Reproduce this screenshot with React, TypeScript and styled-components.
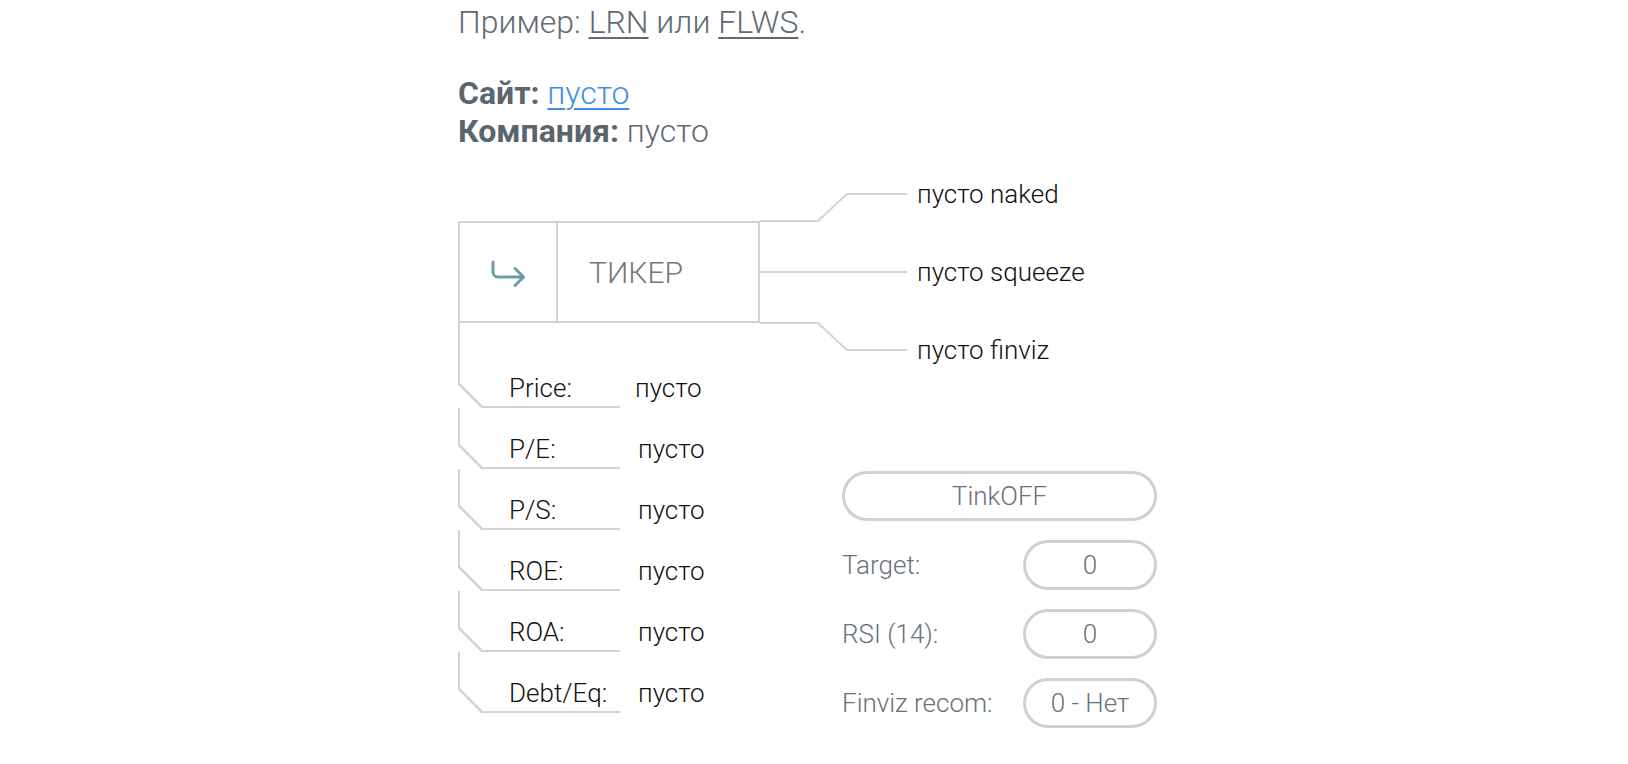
import React from "react";
import styled, { createGlobalStyle } from "styled-components";

const GlobalStyle = createGlobalStyle`
  html, body {
    margin: 0;
    padding: 0;
    background: #ffffff;
  }
  body {
    font-family: Roboto, "Noto Sans", "Liberation Sans", sans-serif;
    -webkit-font-smoothing: antialiased;
  }
`;

const LINE = "#d3d3d3";

const Page = styled.main`
  width: 712px;
  margin: 0 auto;
  padding-top: 3px;
  box-sizing: border-box;
`;

const Lead = styled.p`
  margin: 0;
  font-size: 32px;
  line-height: 38px;
  font-weight: 300;
  color: #5f6a74;
`;

const GrayLink = styled.a`
  color: #5f6a74;
  text-decoration: underline;
  text-decoration-thickness: 2px;
  text-underline-offset: 4px;
`;

const Info = styled.div`
  margin-top: 33px;
  font-size: 32px;
  line-height: 38px;
  font-weight: 300;
  color: #5f6a74;
`;

const InfoLine = styled.div``;

const InfoKey = styled.b`
  font-weight: 700;
  color: #5b656e;
`;

const BlueLink = styled.a`
  color: #3d8fe8;
  text-decoration: underline;
  text-decoration-thickness: 2px;
  text-underline-offset: 4px;
`;

const Hero = styled.section`
  display: flex;
  align-items: center;
  margin-top: 71px;
`;

const TickerBox = styled.div`
  display: flex;
  width: 302px;
  height: 102px;
  box-sizing: border-box;
  border: 2px solid ${LINE};
`;

const IconCell = styled.div`
  width: 98px;
  border-right: 2px solid ${LINE};
  display: flex;
  align-items: center;
  justify-content: center;
  padding-top: 3px;
  box-sizing: border-box;
`;

const TickerInput = styled.input`
  flex: 1;
  min-width: 0;
  border: none;
  outline: none;
  background: transparent;
  padding: 0 0 0 31px;
  font-family: Roboto, "Noto Sans", sans-serif;
  font-size: 30px;
  font-weight: 300;
  color: #333;
  &::placeholder {
    color: #767676;
    opacity: 1;
  }
`;

const Connector = styled.svg`
  display: block;
  flex: none;
  margin: -29px 0;
`;

const Outputs = styled.ul`
  list-style: none;
  margin: -42px 0 -42px 10px;
  padding: 0;
  display: flex;
  flex-direction: column;
  gap: 48px;
`;

const OutputItem = styled.li`
  font-size: 26px;
  line-height: 30px;
  font-weight: 300;
  color: #111;
  white-space: nowrap;
`;

const Lower = styled.section`
  display: grid;
  grid-template-columns: 384px 315px;
  align-items: start;
`;

const Metrics = styled.div`
  display: flex;
  flex-direction: column;
`;

const MetricRow = styled.div`
  display: flex;
  align-items: flex-end;
`;

const MetricCell = styled.div<{ $first?: boolean }>`
  position: relative;
  width: 162px;
  height: ${(p) => (p.$first ? 85 : 61)}px;
  box-sizing: border-box;
  border-left: 2px solid ${LINE};
  border-bottom: 2px solid ${LINE};
  padding: 0 0 4px 49px;
  display: flex;
  align-items: flex-end;
  font-size: 26px;
  line-height: 28px;
  font-weight: 300;
  color: #111;
  &::after {
    content: "";
    position: absolute;
    left: -2px;
    bottom: -2px;
    width: 25px;
    height: 25px;
    background: linear-gradient(
      to top right,
      #fff calc(50% - 1.6px),
      ${LINE} calc(50% - 0.9px),
      ${LINE} calc(50% + 0.9px),
      #fff calc(50% + 1.6px)
    );
  }
`;

const MetricValue = styled.span<{ $gap: number }>`
  margin-left: ${(p) => p.$gap}px;
  padding-bottom: 6px;
  font-size: 26px;
  line-height: 28px;
  font-weight: 300;
  color: #111;
`;

const Side = styled.div`
  margin-top: 148px;
  display: flex;
  flex-direction: column;
  gap: 19px;
`;

const Pill = styled.button`
  height: 50px;
  box-sizing: border-box;
  border: 3px solid #d0d0d0;
  border-radius: 25px;
  background: #fff;
  font-family: Roboto, "Noto Sans", sans-serif;
  font-size: 26px;
  font-weight: 300;
  color: #67727c;
  padding: 0;
  cursor: pointer;
`;

const WidePill = styled(Pill)`
  width: 100%;
`;

const ValuePill = styled(Pill)`
  width: 134px;
`;

const SideRow = styled.div`
  display: flex;
  align-items: center;
  justify-content: space-between;
  height: 50px;
`;

const SideLabel = styled.span`
  font-size: 26px;
  font-weight: 300;
  color: #67727c;
`;

const ReturnIcon = () => (
  <svg width="36" height="30" viewBox="0 0 36 30" fill="none">
    <path
      d="M3 3 V13 a5 5 0 0 0 5 5 H33"
      stroke="#6d9aa3"
      strokeWidth="3"
      strokeLinecap="round"
      strokeLinejoin="round"
    />
    <path
      d="M25 9.5 L33.5 18 L25 26.5"
      stroke="#6d9aa3"
      strokeWidth="3"
      strokeLinecap="round"
      strokeLinejoin="round"
    />
  </svg>
);

const metrics: { label: string; value: string; gap: number }[] = [
  { label: "Price:", value: "пусто", gap: 15 },
  { label: "P/E:", value: "пусто", gap: 18 },
  { label: "P/S:", value: "пусто", gap: 18 },
  { label: "ROE:", value: "пусто", gap: 18 },
  { label: "ROA:", value: "пусто", gap: 18 },
  { label: "Debt/Eq:", value: "пусто", gap: 18 },
];

const sideRows = [
  { label: "Target:", value: "0" },
  { label: "RSI (14):", value: "0" },
  { label: "Finviz recom:", value: "0 - Нет" },
];

export default function App() {
  return (
    <>
      <GlobalStyle />
      <Page>
        <Lead>
          Пример: <GrayLink href="#">LRN</GrayLink> или{" "}
          <GrayLink href="#">FLWS</GrayLink>.
        </Lead>
        <Info>
          <InfoLine>
            <InfoKey>Сайт:</InfoKey> <BlueLink href="#">пусто</BlueLink>
          </InfoLine>
          <InfoLine>
            <InfoKey>Компания:</InfoKey> пусто
          </InfoLine>
        </Info>

        <Hero>
          <TickerBox>
            <IconCell>
              <ReturnIcon />
            </IconCell>
            <TickerInput placeholder="ТИКЕР" />
          </TickerBox>
          <Connector width="147" height="160" viewBox="0 0 147 160" fill="none">
            <path d="M0 29 H58 L87 2 H147" stroke={LINE} strokeWidth="2" />
            <path d="M0 80 H147" stroke={LINE} strokeWidth="2" />
            <path d="M0 131 H58 L87 158 H147" stroke={LINE} strokeWidth="2" />
          </Connector>
          <Outputs>
            <OutputItem>пусто naked</OutputItem>
            <OutputItem>пусто squeeze</OutputItem>
            <OutputItem>пусто finviz</OutputItem>
          </Outputs>
        </Hero>

        <Lower>
          <Metrics>
            {metrics.map((m, i) => (
              <MetricRow key={m.label}>
                <MetricCell $first={i === 0}>{m.label}</MetricCell>
                <MetricValue $gap={m.gap}>{m.value}</MetricValue>
              </MetricRow>
            ))}
          </Metrics>
          <Side>
            <WidePill>TinkOFF</WidePill>
            {sideRows.map((r) => (
              <SideRow key={r.label}>
                <SideLabel>{r.label}</SideLabel>
                <ValuePill>{r.value}</ValuePill>
              </SideRow>
            ))}
          </Side>
        </Lower>
      </Page>
    </>
  );
}
